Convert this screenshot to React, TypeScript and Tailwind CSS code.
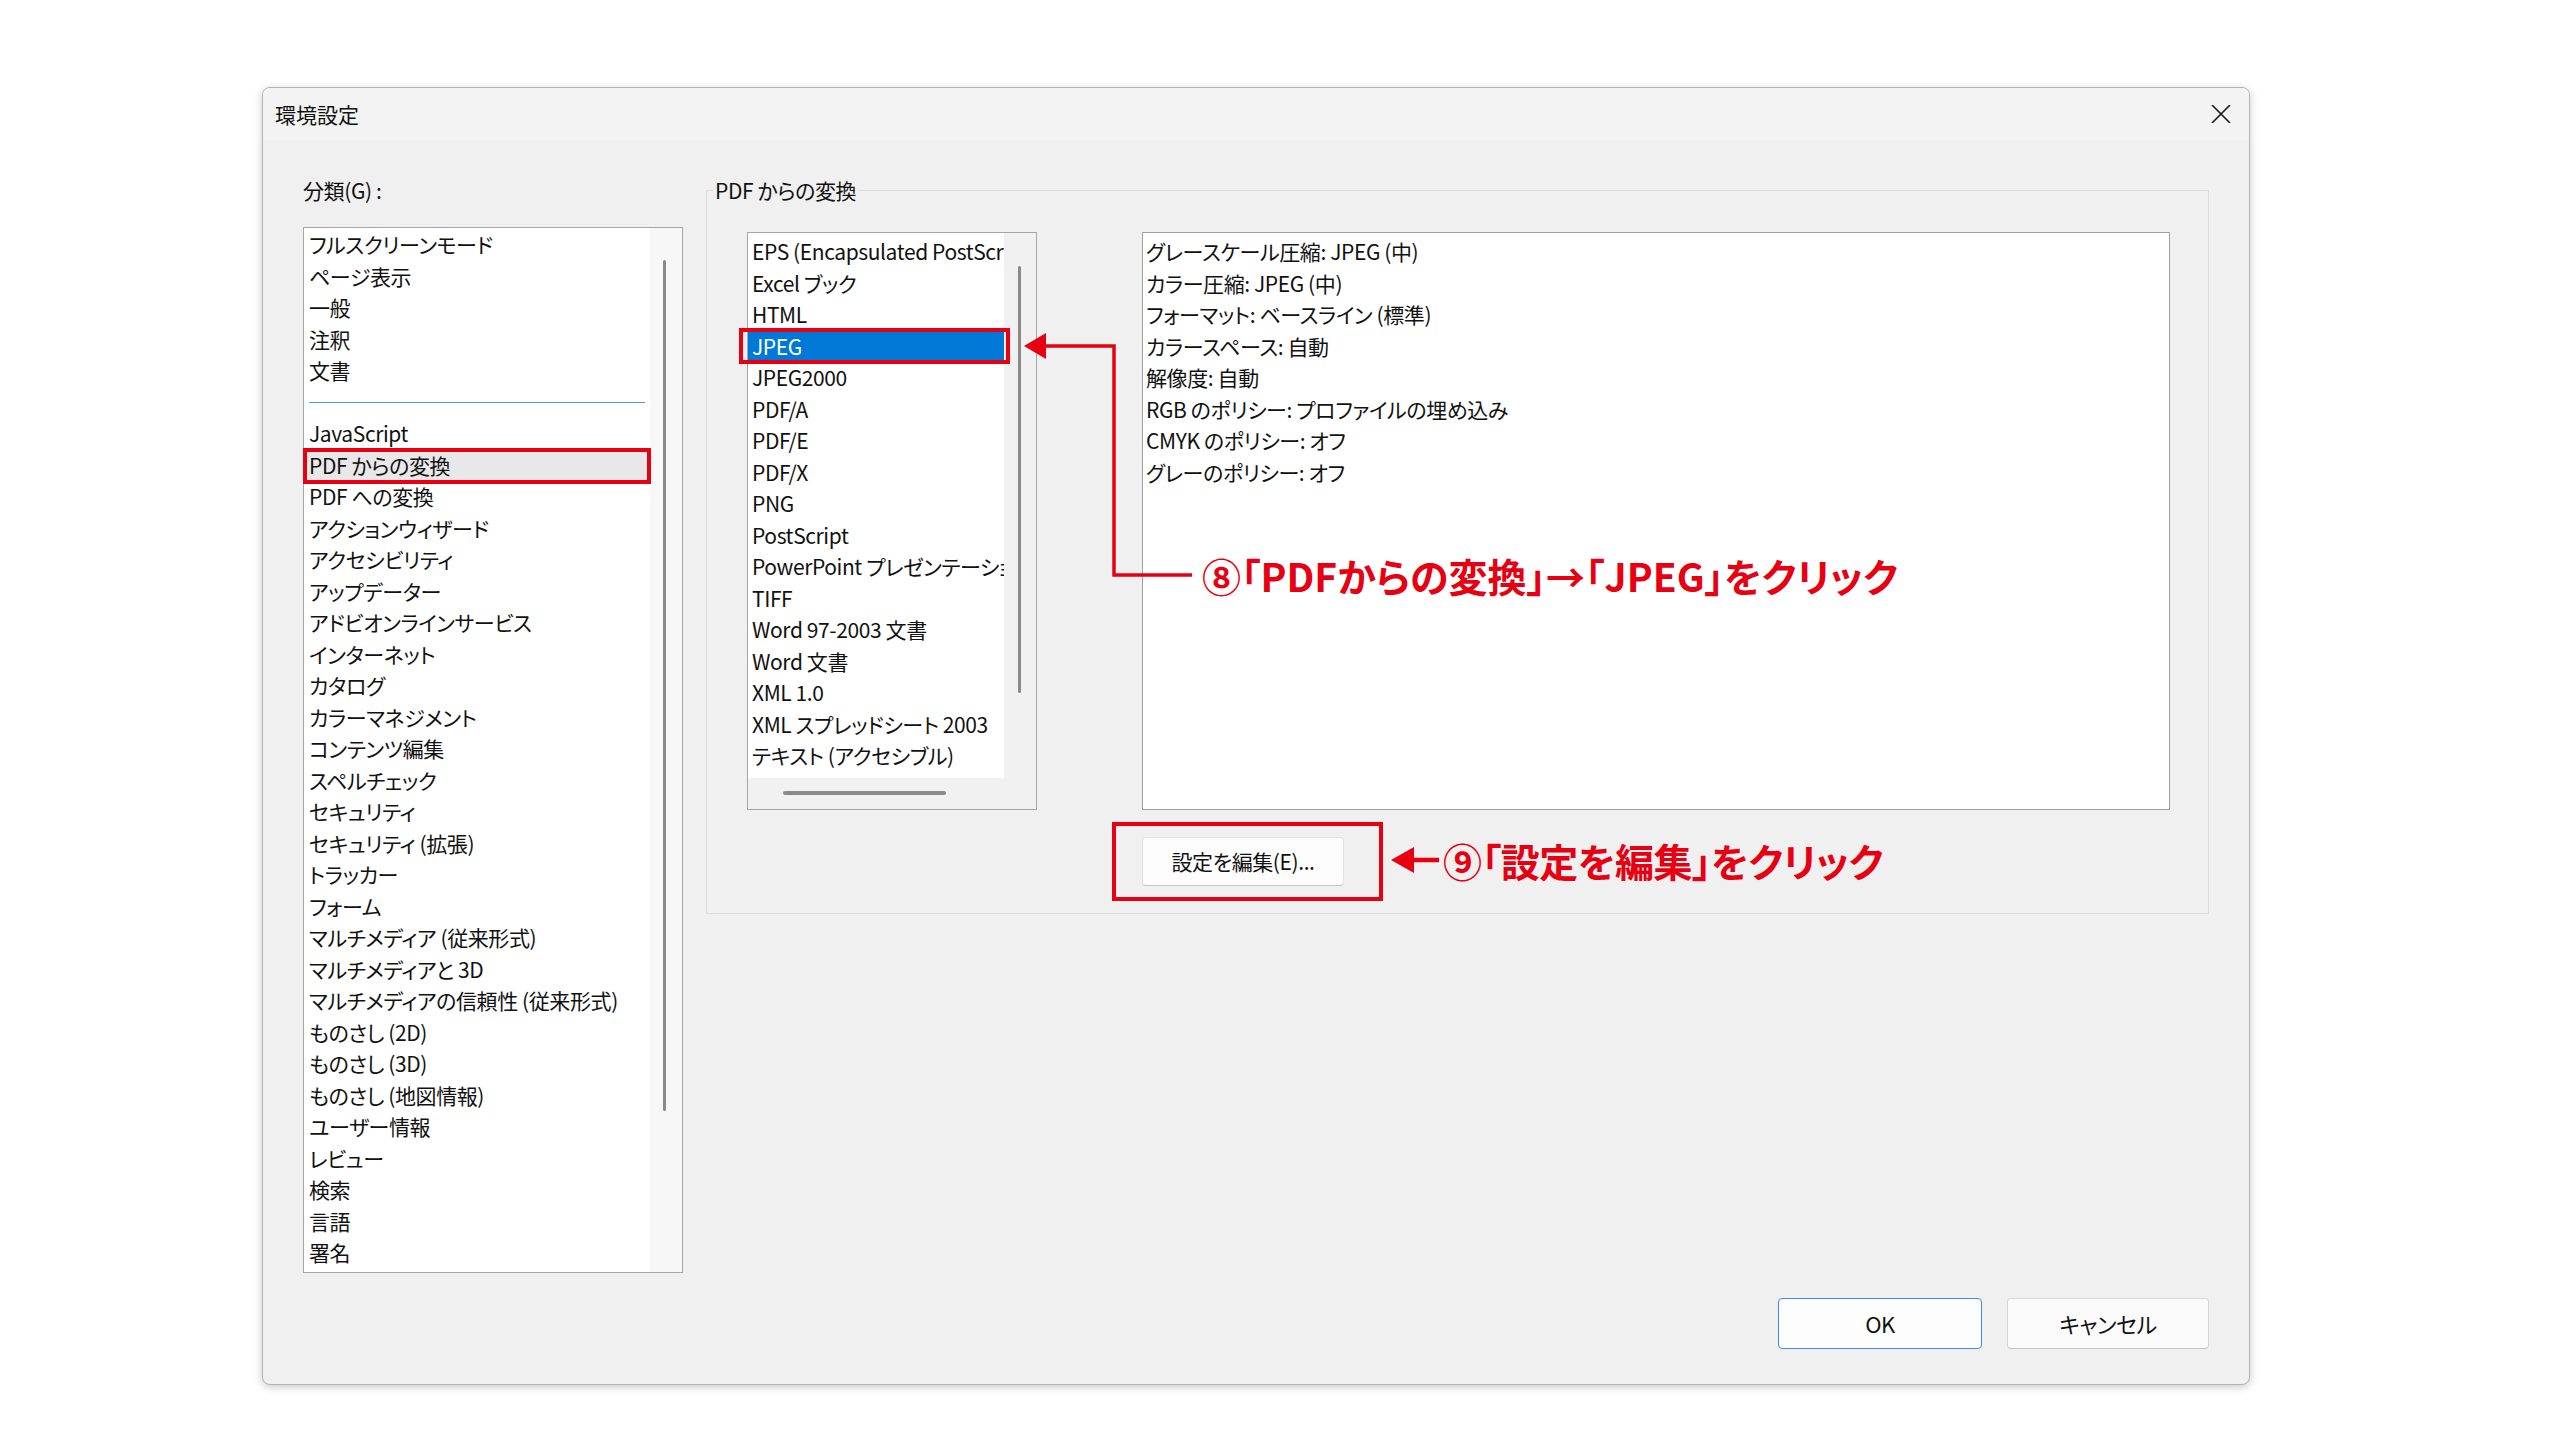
import React from "react";

const ui = "font-['Noto_Sans_CJK_JP',sans-serif] [font-feature-settings:'palt']";

const groupA = ["フルスクリーンモード", "ページ表示", "一般", "注釈", "文書"];
const groupB = [
  "JavaScript",
  "PDF からの変換",
  "PDF への変換",
  "アクションウィザード",
  "アクセシビリティ",
  "アップデーター",
  "アドビオンラインサービス",
  "インターネット",
  "カタログ",
  "カラーマネジメント",
  "コンテンツ編集",
  "スペルチェック",
  "セキュリティ",
  "セキュリティ (拡張)",
  "トラッカー",
  "フォーム",
  "マルチメディア (従来形式)",
  "マルチメディアと 3D",
  "マルチメディアの信頼性 (従来形式)",
  "ものさし (2D)",
  "ものさし (3D)",
  "ものさし (地図情報)",
  "ユーザー情報",
  "レビュー",
  "検索",
  "言語",
  "署名",
];

const formats = [
  "EPS (Encapsulated PostScript)",
  "Excel ブック",
  "HTML",
  "JPEG",
  "JPEG2000",
  "PDF/A",
  "PDF/E",
  "PDF/X",
  "PNG",
  "PostScript",
  "PowerPoint プレゼンテーション",
  "TIFF",
  "Word 97-2003 文書",
  "Word 文書",
  "XML 1.0",
  "XML スプレッドシート 2003",
  "テキスト (アクセシブル)",
  "テキスト (プレーン)",
];

const settings = [
  "グレースケール圧縮: JPEG (中)",
  "カラー圧縮: JPEG (中)",
  "フォーマット: ベースライン (標準)",
  "カラースペース: 自動",
  "解像度: 自動",
  "RGB のポリシー: プロファイルの埋め込み",
  "CMYK のポリシー: オフ",
  "グレーのポリシー: オフ",
];

function CategoryList() {
  return (
    <div className="w-[380px] h-[1046px] border border-[#a6a6a6] bg-white flex">
      <div className="flex-1 pt-[1px]">
        {groupA.map((t) => (
          <div key={t} className="h-[31.5px] leading-[31.5px] pl-[5px] whitespace-nowrap">
            {t}
          </div>
        ))}
        <div className="h-[31.5px] flex items-center px-[5px]">
          <div className="h-px w-full bg-[#4a98de]" />
        </div>
        {groupB.map((t) => (
          <div
            key={t}
            className={
              t === "PDF からの変換"
                ? "h-[31.5px] leading-[31.5px] pl-[5px] whitespace-nowrap bg-[#e8e8e8]"
                : "h-[31.5px] leading-[31.5px] pl-[5px] whitespace-nowrap"
            }
          >
            {t}
          </div>
        ))}
      </div>
      <div className="w-[32px] bg-[#f7f7f7] pt-[32px] pl-[13px]">
        <div className="w-[3px] h-[851px] rounded-full bg-[#8a8a8a]" />
      </div>
    </div>
  );
}

function FormatList() {
  return (
    <div className="w-[290px] h-[578px] border border-[#a6a6a6] bg-[#f1f1f1] flex flex-col">
      <div className="flex h-[545px]">
        <div className="w-[256px] bg-white overflow-hidden pt-[3px]">
          {formats.map((t) => (
            <div
              key={t}
              className={
                t === "JPEG"
                  ? "h-[31.5px] leading-[31.5px] pl-[4px] whitespace-nowrap overflow-hidden bg-[#0078d7] text-white"
                  : "h-[31.5px] leading-[31.5px] pl-[4px] whitespace-nowrap overflow-hidden"
              }
            >
              {t}
            </div>
          ))}
        </div>
        <div className="flex-1 pt-[33px] pl-[14px]">
          <div className="w-[3px] h-[427px] rounded-full bg-[#8a8a8a]" />
        </div>
      </div>
      <div className="flex-1 pt-[13px] pl-[35px]">
        <div className="w-[163px] h-[4px] rounded-full bg-[#8a8a8a]" />
      </div>
    </div>
  );
}

function SettingsBox() {
  return (
    <div className="w-[1028px] h-[578px] border border-[#a0a0a0] bg-white pt-[3px] pl-[3px]">
      {settings.map((t) => (
        <div key={t} className="h-[31.5px] leading-[31.5px] whitespace-nowrap">
          {t}
        </div>
      ))}
    </div>
  );
}

function Annotations() {
  return (
    <div className="absolute inset-0 pointer-events-none">
      {/* highlight frames */}
      <div className="absolute left-[303px] top-[448px] w-[348px] h-[36px] border-[4px] border-[#e60012]" />
      <div className="absolute left-[739px] top-[328px] w-[271px] h-[36px] border-[4px] border-[#e60012]" />
      <div className="absolute left-[1112px] top-[822px] w-[271px] h-[79px] border-[4px] border-[#e60012]" />

      {/* connector arrows */}
      <svg className="absolute left-0 top-0" width="2560" height="1440" viewBox="0 0 2560 1440">
        <path d="M1042 346 H1114 V575 H1192" fill="none" stroke="#e60012" strokeWidth="3.5" />
        <polygon points="1024,346 1046,333 1046,359" fill="#e60012" />
        <path d="M1410 860 H1439" fill="none" stroke="#e60012" strokeWidth="4.5" />
        <polygon points="1391,860 1414,847 1414,873" fill="#e60012" />
      </svg>

      <div className="absolute left-[1202px] top-[552px] h-[46px] leading-[46px] whitespace-nowrap font-['Noto_Sans_CJK_JP',sans-serif] font-bold text-[39px] tracking-[0px] text-[#e60012]">
        ⑧「PDFからの変換」→「JPEG」をクリック
      </div>
      <div className="absolute left-[1443px] top-[837px] h-[46px] leading-[46px] whitespace-nowrap font-['Noto_Sans_CJK_JP',sans-serif] font-bold text-[39px] text-[#e60012]">
        ⑨「設定を編集」をクリック
      </div>
    </div>
  );
}

export default function App() {
  return (
    <div className={`relative w-[2560px] h-[1440px] bg-white pt-[87px] pl-[262px] text-[21px] tracking-[-0.4px] text-[#111] ${ui}`}>
      <div className="w-[1988px] h-[1298px] flex flex-col rounded-[8px] border border-[#b4b4b4] bg-[#f0f0f0] overflow-hidden shadow-[0_2px_8px_rgba(0,0,0,0.22)]">
        {/* title bar */}
        <div className="h-[52px] shrink-0 flex items-center justify-between bg-[#f3f3f3] pl-[12px] pr-[18px]">
          <span className="text-[21px] leading-none tracking-normal">環境設定</span>
          <svg width="20" height="18" viewBox="0 0 20 18">
            <path d="M1 0 L19 18 M19 0 L1 18" stroke="#1a1a1a" strokeWidth="1.6" />
          </svg>
        </div>

        {/* main body */}
        <div className="flex-1 flex items-start pl-[40px] gap-[23px]">
          <div className="pt-[35px]">
            <div className="h-[30px] leading-[30px]">分類(G) :</div>
            <div className="mt-[22px]">
              <CategoryList />
            </div>
          </div>

          <div className="relative mt-[50px] w-[1503px] border border-[#dcdcdc] pt-[41px] pl-[40px] pb-[27px] flex items-start gap-[105px]">
            <div className="absolute left-[6px] -top-[16px] h-[30px] leading-[30px] px-[2px] bg-[#f0f0f0] whitespace-nowrap">
              PDF からの変換
            </div>
            <FormatList />
            <div className="flex flex-col">
              <SettingsBox />
              <button className="mt-[27px] w-[202px] h-[49px] rounded-[4px] border border-[#e2e2e2] border-b-[#c4c4c4] bg-[#fdfdfd] text-[21px]">
                設定を編集(E)...
              </button>
            </div>
          </div>
        </div>

        {/* dialog buttons */}
        <div className="shrink-0 flex justify-end gap-[25px] pr-[40px] pb-[35px]">
          <button className="w-[204px] h-[51px] rounded-[4px] border-[1.5px] border-[#3a8ee6] bg-[#fdfdfd] text-[22px]">
            OK
          </button>
          <button className="w-[202px] h-[51px] rounded-[4px] border border-[#d6d6d6] border-b-[#c6c6c6] bg-[#fbfbfb] text-[22px]">
            キャンセル
          </button>
        </div>
      </div>

      <Annotations />
    </div>
  );
}
